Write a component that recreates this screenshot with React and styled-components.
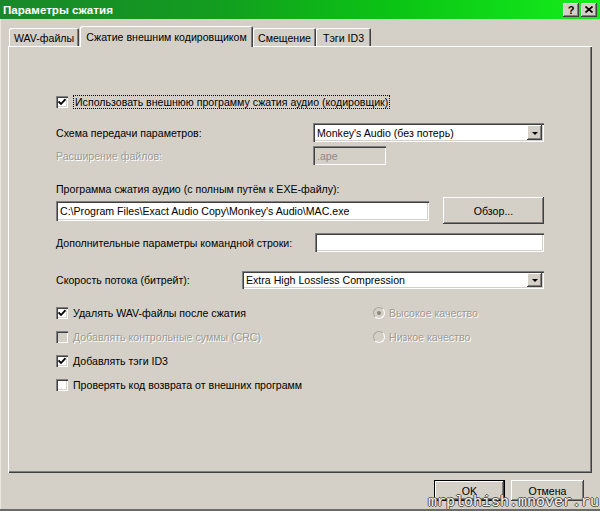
import React from "react";
import styled, { createGlobalStyle } from "styled-components";

const GlobalStyle = createGlobalStyle`
  html, body {
    margin: 0;
    padding: 0;
    background: #d4d0c8;
  }
  body {
    font-family: "Liberation Sans", Arial, sans-serif;
    font-size: 10.6px;
    color: #000;
  }
  * {
    box-sizing: border-box;
  }
`;

const Window = styled.div`
  position: relative;
  width: 600px;
  height: 511px;
  background: #d4d0c8;
  display: flex;
  flex-direction: column;
  overflow: hidden;
  box-shadow: inset 0 -2px #6b6a66, inset 1px 0 #e8e6e0;
`;

const TitleBar = styled.div`
  height: 19px;
  flex: none;
  display: flex;
  align-items: center;
  justify-content: space-between;
  padding: 0 3px 0 3px;
  background: linear-gradient(to right, #1a872a 0%, #139c20 35%, #0bc414 65%, #14ee1c 100%);
  color: #fff;
  font-weight: bold;
  font-size: 11.6px;
`;

const TitleButtons = styled.div`
  display: flex;
  gap: 2px;
`;

const TitleButton = styled.div`
  width: 16px;
  height: 14px;
  display: flex;
  align-items: center;
  justify-content: center;
  background: #d4d0c8;
  color: #000;
  font-size: 11px;
  font-weight: bold;
  box-shadow: inset -1px -1px #404040, inset 1px 1px #fff, inset -2px -2px #808080;
`;

const Body = styled.div`
  display: flex;
  flex-direction: column;
  padding: 7px 8px 0 8px;
`;

const Tabs = styled.div`
  display: flex;
  align-items: flex-end;
  height: 20px;
  padding-left: 1px;
  position: relative;
  z-index: 1;
`;

const Tab = styled.div`
  width: ${p => p.$w}px;
  height: ${p => (p.$active ? 21 : 18)}px;
  margin-left: ${p => p.$ml || 0}px;
  margin-bottom: ${p => (p.$active ? -1 : 0)}px;
  display: flex;
  align-items: center;
  justify-content: center;
  padding-top: ${p => (p.$active ? 0 : 1)}px;
  background: #d4d0c8;
  border-radius: 2px 2px 0 0;
  box-shadow: inset 1px 1px #fff, inset -1px 0 #404040, inset -2px 0 #808080;
  white-space: nowrap;
`;

const Panel = styled.div`
  height: 427px;
  background: #d4d0c8;
  box-shadow: inset 1px 1px #fff, inset -1px -1px #404040, inset -2px -2px #808080;
  padding: 48px 48px 0;
  display: flex;
  flex-direction: column;
`;

const CheckRow = styled.div`
  display: flex;
  align-items: center;
  height: ${p => p.$h || 24}px;
  margin-top: ${p => p.$mt || 0}px;
  color: ${p => (p.$disabled ? "#9d9a92" : "#000")};
  text-shadow: ${p => (p.$disabled ? "1px 1px #fff" : "none")};
  white-space: nowrap;
`;

const CheckBox = styled.div`
  width: 12px;
  height: 12px;
  flex: none;
  margin-right: 5px;
  background: ${p => (p.$disabled ? "#d4d0c8" : "#fff")};
  box-shadow: inset 1px 1px #808080, inset 2px 2px #404040, inset -1px -1px #fff, inset -2px -2px #d4d0c8;
  display: flex;
  align-items: center;
  justify-content: center;
`;

const Radio = styled.div`
  width: 12px;
  height: 12px;
  flex: none;
  margin-right: 4px;
  border-radius: 50%;
  background: #d4d0c8;
  border: 1px solid #a9a69e;
  border-right-color: #fff;
  border-bottom-color: #fff;
  display: flex;
  align-items: center;
  justify-content: center;

  &::after {
    content: "";
    width: 4px;
    height: 4px;
    border-radius: 50%;
    background: ${p => (p.$checked ? "#8a877f" : "transparent")};
  }
`;

const FocusLabel = styled.span`
  padding: 1px 2px;
  outline: 1px dotted #000;
  outline-offset: -1px;
`;

const FieldRow = styled.div`
  display: grid;
  grid-template-columns: ${p => p.$label}px ${p => (p.$cw ? `${p.$cw}px` : "1fr")};
  align-items: center;
  height: ${p => p.$h || 19}px;
  margin-top: ${p => p.$mt || 0}px;
  white-space: nowrap;
`;

const Label = styled.div`
  margin-top: ${p => p.$mt || 0}px;
  color: ${p => (p.$disabled ? "#9d9a92" : "#000")};
  text-shadow: ${p => (p.$disabled ? "1px 1px #fff" : "none")};
  white-space: nowrap;
`;

const Field = styled.div`
  position: relative;
  width: ${p => (p.$w ? `${p.$w}px` : "auto")};
  height: ${p => p.$h || 20}px;
  flex: none;
  background: ${p => (p.$disabled ? "#d4d0c8" : "#fff")};
  color: ${p => (p.$disabled ? "#8c8a84" : "#000")};
  box-shadow: inset 1px 1px #808080, inset 2px 2px #404040, inset -1px -1px #fff, inset -2px -2px #d4d0c8;
  display: flex;
  align-items: center;
  padding: 0 4px;
  white-space: nowrap;
  overflow: hidden;
`;

const DropButton = styled.div`
  position: absolute;
  right: 2px;
  top: 2px;
  bottom: 2px;
  width: 15px;
  background: #d4d0c8;
  box-shadow: inset -1px -1px #404040, inset 1px 1px #fff, inset -2px -2px #808080;
  display: flex;
  align-items: center;
  justify-content: center;

  &::after {
    content: "";
    border-left: 3px solid transparent;
    border-right: 3px solid transparent;
    border-top: 3px solid #000;
    margin-top: 1px;
  }
`;

const PathRow = styled.div`
  display: flex;
  align-items: center;
  gap: 14px;
  height: 27px;
  margin-top: ${p => p.$mt || 0}px;
`;

const Button = styled.div`
  width: ${p => p.$w}px;
  height: ${p => p.$h || 21}px;
  flex: none;
  display: flex;
  align-items: center;
  justify-content: center;
  background: #d4d0c8;
  box-shadow: ${p =>
    p.$default
      ? "inset 0 0 0 1px #000, inset -2px -2px #404040, inset 2px 2px #fff, inset -3px -3px #808080"
      : "inset -1px -1px #404040, inset 1px 1px #fff, inset -2px -2px #808080"};
`;

const Options = styled.div`
  display: grid;
  grid-template-columns: 317px 1fr;
  grid-auto-rows: 24px;
  margin-top: 12px;
`;

const Footer = styled.div`
  display: flex;
  justify-content: flex-end;
  gap: 6px;
  padding: 7px 8px 0 0;
`;

const Watermark = styled.div`
  position: absolute;
  right: 1px;
  bottom: 0;
  font-family: "Liberation Mono", "Courier New", monospace;
  font-size: 15px;
  line-height: 16px;
  color: #f4f4f0;
  text-shadow: 1px 0 #55544f, -1px 0 #55544f, 0 1px #55544f, 0 -1px #55544f;
`;

function Check() {
  return (
    <svg width="8" height="8" viewBox="0 0 8 8">
      <path d="M0.5 3.5 L3 6 L7.5 1.2" fill="none" stroke="#000" strokeWidth="1.8" />
    </svg>
  );
}

function Checkbox({ checked, disabled, children, h, mt }) {
  return (
    <CheckRow $disabled={disabled} $h={h} $mt={mt}>
      <CheckBox $disabled={disabled}>{checked && <Check />}</CheckBox>
      {children}
    </CheckRow>
  );
}

function Dropdown({ value, w, h }) {
  return (
    <Field $w={w} $h={h}>
      {value}
      <DropButton />
    </Field>
  );
}

export default function App() {
  return (
    <>
      <GlobalStyle />
      <Window>
        <TitleBar>
          <span>Параметры сжатия</span>
          <TitleButtons>
            <TitleButton>?</TitleButton>
            <TitleButton>
              <svg width="8" height="7" viewBox="0 0 8 7">
                <path d="M0.5 0.5 L7.5 6.5 M7.5 0.5 L0.5 6.5" stroke="#000" strokeWidth="1.6" />
              </svg>
            </TitleButton>
          </TitleButtons>
        </TitleBar>

        <Body>
          <Tabs>
            <Tab $w={70}>WAV-файлы</Tab>
            <Tab $w={173} $ml={1} $active>Сжатие внешним кодировщиком</Tab>
            <Tab $w={63}>Смещение</Tab>
            <Tab $w={55}>Тэги ID3</Tab>
          </Tabs>

          <Panel>
            <Checkbox checked h={16}>
              <FocusLabel>Использовать внешнюю программу сжатия аудио (кодировщик)</FocusLabel>
            </Checkbox>

            <FieldRow $label={257} $cw={231} $mt={13}>
              <Label>Схема передачи параметров:</Label>
              <Dropdown value="Monkey's Audio (без потерь)" h={19} />
            </FieldRow>

            <FieldRow $label={257} $cw={73} $mt={4}>
              <Label $disabled>Расширение файлов:</Label>
              <Field $disabled $h={19}>.ape</Field>
            </FieldRow>

            <Label $mt={18}>Программа сжатия аудио (с полным путём к EXE-файлу):</Label>

            <PathRow $mt={2}>
              <Field $w={373}>C:\Program Files\Exact Audio Copy\Monkey's Audio\MAC.exe</Field>
              <Button $w={101} $h={27}>Обзор...</Button>
            </PathRow>

            <FieldRow $label={259} $mt={9}>
              <Label>Дополнительные параметры командной строки:</Label>
              <Field $h={19} />
            </FieldRow>

            <FieldRow $label={186} $mt={19} $h={18}>
              <Label>Скорость потока (битрейт):</Label>
              <Dropdown value="Extra High Lossless Compression" h={18} />
            </FieldRow>

            <Options>
              <Checkbox checked>Удалять WAV-файлы после сжатия</Checkbox>
              <CheckRow $disabled>
                <Radio $checked />
                Высокое качество
              </CheckRow>
              <Checkbox disabled>Добавлять контрольные суммы (CRC)</Checkbox>
              <CheckRow $disabled>
                <Radio />
                Низкое качество
              </CheckRow>
              <Checkbox checked>Добавлять тэги ID3</Checkbox>
              <div />
              <Checkbox>Проверять код возврата от внешних программ</Checkbox>
            </Options>
          </Panel>

          <Footer>
            <Button $w={71} $default>OK</Button>
            <Button $w={73}>Отмена</Button>
          </Footer>
        </Body>

        <Watermark>mrplohish.mnover.ru</Watermark>
      </Window>
    </>
  );
}
